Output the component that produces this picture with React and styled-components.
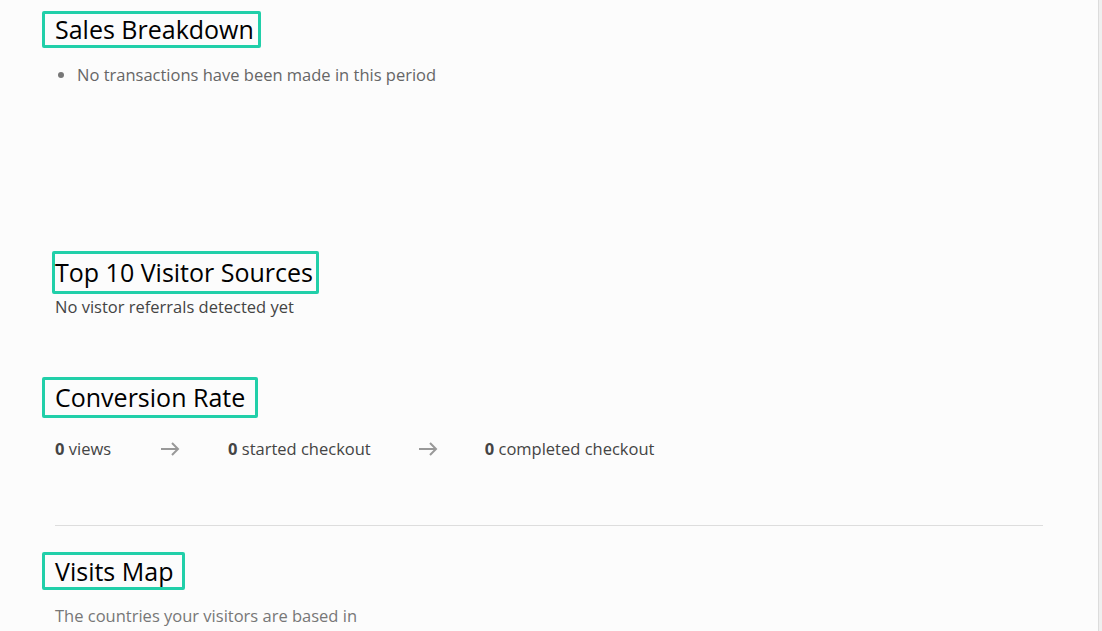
import React from "react";
import styled, { createGlobalStyle } from "styled-components";

const GlobalStyle = createGlobalStyle`
  html, body {
    margin: 0;
    padding: 0;
    background: #fcfcfc;
  }
  body {
    font-family: "Open Sans", "Lato", sans-serif;
    color: #555;
  }
`;

const Page = styled.div`
  display: flex;
  min-height: 631px;
`;

const Main = styled.main`
  flex: 1;
  padding: 11px 55px 0 55px;
`;

const Rail = styled.div`
  width: 3px;
  border-left: 1px solid #dcdcdc;
  background: #efefef;
`;

const Section = styled.section`
  margin-bottom: ${(p) => p.$gap || 0}px;
`;

const Heading = styled.h2`
  display: inline-block;
  margin: 0 0 0 ${(p) => -(p.$pl + 3)}px;
  padding: 0 ${(p) => p.$pr}px 0 ${(p) => p.$pl}px;
  height: ${(p) => p.$h}px;
  line-height: ${(p) => p.$h}px;
  border: 3px solid #21cfa9;
  border-radius: 2px;
  font-size: 25px;
  font-weight: 400;
  color: #000;
  box-sizing: content-box;
`;

const List = styled.ul`
  margin: 17px 0 0 0;
  padding-left: 22px;
  font-size: 16.5px;
  line-height: 20px;
  color: #666;
  li::marker {
    color: #777;
  }
`;

const Note = styled.p`
  margin: ${(p) => p.$mt || 0}px 0 0;
  font-size: 16.5px;
  line-height: 20px;
  color: ${(p) => p.$color || "#444"};
`;

const Funnel = styled.div`
  display: flex;
  align-items: center;
  margin-top: 21px;
  font-size: 16.5px;
  line-height: 20px;
  color: #444;
`;

const Step = styled.span`
  b {
    font-weight: 700;
  }
`;

const Arrow = styled.span`
  display: inline-flex;
  margin: 0 ${(p) => p.$right}px 0 ${(p) => p.$left}px;
`;

const Divider = styled.hr`
  border: 0;
  border-top: 1px solid #dddddd;
  margin: 66px 0 26px;
`;

const ArrowIcon = () => (
  <svg width="20" height="14" viewBox="0 0 20 14" fill="none">
    <path d="M1 7h17M12 1l6 6-6 6" stroke="#999" strokeWidth="2" />
  </svg>
);

export default function App() {
  return (
    <>
      <GlobalStyle />
      <Page>
        <Main>
          <Section $gap={166}>
            <Heading $pl={10} $pr={4} $h={31}>Sales Breakdown</Heading>
            <List>
              <li>No transactions have been made in this period</li>
            </List>
          </Section>

          <Section $gap={60}>
            <Heading $pl={0} $pr={3} $h={37}>Top 10 Visitor Sources</Heading>
            <Note $mt={3}>No vistor referrals detected yet</Note>
          </Section>

          <Section>
            <Heading $pl={10} $pr={10} $h={35}>Conversion Rate</Heading>
            <Funnel>
              <Step><b>0</b> views</Step>
              <Arrow $left={49} $right={48}><ArrowIcon /></Arrow>
              <Step><b>0</b> started checkout</Step>
              <Arrow $left={47} $right={47}><ArrowIcon /></Arrow>
              <Step><b>0</b> completed checkout</Step>
            </Funnel>
          </Section>

          <Divider />

          <Section>
            <Heading $pl={10} $pr={9} $h={32}>Visits Map</Heading>
            <Note $mt={16} $color="#777">The countries your visitors are based in</Note>
          </Section>
        </Main>
        <Rail />
      </Page>
    </>
  );
}
